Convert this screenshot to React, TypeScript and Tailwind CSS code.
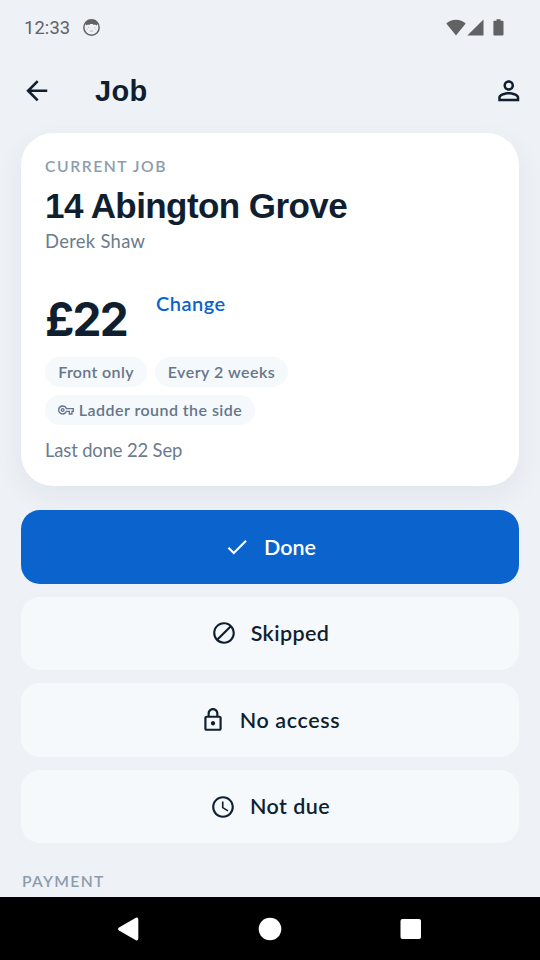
import React from 'react'

type IconProps = { d: string; className?: string }

const Icon: React.FC<IconProps> = ({ d, className = 'w-[26px] h-[26px]' }) => (
  <svg viewBox="0 0 24 24" fill="currentColor" className={className}>
    <path d={d} />
  </svg>
)

const icons = {
  back: 'M20 11H7.83l5.59-5.59L12 4l-8 8 8 8 1.41-1.41L7.83 13H20v-2z',
  person:
    'M12 5.9a2.1 2.1 0 1 1 0 4.2 2.1 2.1 0 0 1 0-4.2m0 9c2.97 0 6.1 1.46 6.1 2.1v1.1H5.9V17c0-.64 3.13-2.1 6.1-2.1M12 4C9.79 4 8 5.79 8 8s1.79 4 4 4 4-1.79 4-4-1.79-4-4-4zm0 9c-2.67 0-8 1.34-8 4v3h16v-3c0-2.66-5.33-4-8-4z',
  check: 'M9 16.17 4.83 12l-1.42 1.41L9 19 21 7l-1.41-1.41z',
  lock:
    'M12 17c1.1 0 2-.9 2-2s-.9-2-2-2-2 .9-2 2 .9 2 2 2zm6-9h-1V6c0-2.76-2.24-5-5-5S7 3.24 7 6v2H6c-1.1 0-2 .9-2 2v10c0 1.1.9 2 2 2h12c1.1 0 2-.9 2-2V10c0-1.1-.9-2-2-2zM9 6c0-1.66 1.34-3 3-3s3 1.34 3 3v2H9V6zm9 14H6V10h12v10z',
  skip:
    'M12 2C6.48 2 2 6.48 2 12s4.48 10 10 10 10-4.48 10-10S17.52 2 12 2zM4 12c0-4.42 3.58-8 8-8 1.85 0 3.55.63 4.9 1.69L5.69 16.9A7.9 7.9 0 0 1 4 12zm8 8a7.9 7.9 0 0 1-4.9-1.69L18.31 7.1A7.9 7.9 0 0 1 20 12c0 4.42-3.58 8-8 8z',
  clock:
    'M11.99 2C6.47 2 2 6.48 2 12s4.47 10 9.99 10C17.52 22 22 17.52 22 12S17.52 2 11.99 2zM12 20c-4.42 0-8-3.58-8-8s3.58-8 8-8 8 3.58 8 8-3.58 8-8 8zm.5-13H11v6l5.25 3.15.75-1.23-4.5-2.67z',
  key:
    'M22 19h-6v-4h-2.68c-1.14 2.42-3.6 4-6.32 4-3.86 0-7-3.14-7-7s3.14-7 7-7c2.72 0 5.17 1.58 6.32 4H24v6h-2v4zm-4-2h2v-4h2v-2H11.94l-.23-.67C11.01 8.34 9.11 7 7 7c-2.76 0-5 2.24-5 5s2.24 5 5 5c2.11 0 4.01-1.34 4.71-3.33l.23-.67H18v4zM7 15c-1.65 0-3-1.35-3-3s1.35-3 3-3 3 1.35 3 3-1.35 3-3 3zm0-4c-.55 0-1 .45-1 1s.45 1 1 1 1-.45 1-1-.45-1-1-1z',
}

const StatusBar: React.FC = () => (
  <div className="h-[55px] shrink-0 pl-6 pr-[36.5px] flex items-center text-[#616263]">
    <span className="pt-px font-['Roboto',sans-serif] text-[18.4px] tracking-[0.1px] leading-none">12:33</span>
    <svg viewBox="0 0 16 16" className="w-[17px] h-[17px] ml-[13px]" fill="none">
      <circle cx="8" cy="8" r="7.2" stroke="currentColor" strokeWidth="1.4" />
      <path d="M2 4.4 4.600 1h6.800L14 4.400l-1.200 1.700-1.400-1-1.200.5-1-.8H6.800l-1 .8-1.200-.5-1.400 1z" fill="currentColor" />
      <path d="M5.3 7.6v.8M10.7 7.6v.8M6.5 11.3h3M3.6 9.5h.7M11.7 9.5h.7" stroke="currentColor" strokeWidth=".8" opacity=".5" />
    </svg>
    <div className="ml-auto flex items-center">
      <svg viewBox="0 0 20 17" className="w-5 h-[17px]" fill="currentColor">
        <path d="M10 16.5.3 4.6C2.7 2.2 6.2.7 10 .7s7.3 1.5 9.7 3.9z" />
      </svg>
      <svg viewBox="0 0 17 17" className="w-[17px] h-[17px] ml-px" fill="currentColor">
        <path d="M16.5.5v16H.3z" />
      </svg>
      <svg viewBox="0 0 11 17" className="w-[11px] h-[17px] ml-[8.5px]" fill="currentColor">
        <path d="M3.5.2h4v1.6h2.2q.8 0 .8.8v13q0 1-.9 1H1.3q-.9 0-.9-1v-13q0-.8.8-.8h2.3z" />
      </svg>
    </div>
  </div>
)

const Header: React.FC = () => (
  <header className="h-[71px] shrink-0 pl-[21px] pr-[15.5px] pt-px flex items-center">
    <button>
      <Icon d={icons.back} className="w-[31.5px] h-[31.5px]" />
    </button>
    <h1 className="ml-[42.5px] font-['Liberation_Sans',sans-serif] font-bold text-[29px] leading-none tracking-[0.3px]">Job</h1>
    <button className="ml-auto">
      <Icon d={icons.person} className="w-[31.5px] h-[31.5px]" />
    </button>
  </header>
)

const Chip: React.FC<{ children: React.ReactNode; className: string }> = ({ children, className }) => (
  <span className={`h-[30px] rounded-full bg-[#f5f9fc] flex items-center justify-center whitespace-nowrap text-[16px] font-semibold text-[#65768a] ${className}`}>
    {children}
  </span>
)

const JobCard: React.FC = () => (
  <section className="h-[353px] shrink-0 rounded-[32px] bg-white px-6 pt-[22px] shadow-[0_10px_30px_rgba(15,35,55,0.06)]">
    <p className="h-[22px] leading-[22px] text-[15.7px] font-semibold tracking-[1.55px] text-[#8c9cae]">CURRENT JOB</p>
    <h2 className="mt-[9px] h-10 leading-10 font-['Liberation_Sans',sans-serif] font-bold text-[35px] tracking-[-0.57px] whitespace-nowrap">
      14 Abington Grove
    </h2>
    <p className="mt-[3px] h-6 leading-6 text-[18.4px] tracking-[0.3px] text-[#6b7b8e]">Derek Shaw</p>
    <div className="mt-[34px] h-[60px] flex items-start">
      <span className="w-[111px] pt-[7px] leading-[50px] font-['Inter',sans-serif] font-bold text-[46px] tracking-[-1.8px]">£22</span>
      <button className="pt-px leading-[30px] text-[20px] font-semibold tracking-[0.5px] text-[#0b63ce]">Change</button>
    </div>
    <div className="mt-[9.5px] flex flex-wrap gap-2">
      <Chip className="w-[102px] tracking-[0.35px]">Front only</Chip>
      <Chip className="w-[133px] tracking-[0.5px]">Every 2 weeks</Chip>
      <Chip className="w-[210px] gap-[5px] tracking-[0.45px]">
        <Icon d={icons.key} className="w-4 h-4" />
        Ladder round the side
      </Chip>
    </div>
    <p className="mt-[13px] leading-6 text-[18.4px] tracking-[-0.13px] text-[#6b7b8e]">Last done 22 Sep</p>
  </section>
)

type ActionProps = { icon: string; label: string; primary?: boolean; className?: string }

const Action: React.FC<ActionProps> = ({ icon, label, primary, className = '' }) => (
  <button
    className={`w-full h-[73.5px] shrink-0 rounded-[19px] flex items-center justify-center gap-3.5 text-[21.5px] font-semibold ${
      primary ? 'bg-[#0b63ce] text-white' : 'bg-[#f5f9fc]'
    }`}
  >
    <Icon d={icon} />
    <span className={className}>{label}</span>
  </button>
)

const NavBar: React.FC = () => (
  <nav className="h-[63.5px] shrink-0 pt-[1.5px] bg-black text-white flex items-center justify-center gap-[117px]">
    <svg viewBox="0 0 24 24" className="w-6 h-6" fill="currentColor">
      <path d="M2 10.5 18.9.8Q21.3 0 21.3 2.5v19q0 2.500-2.400 1.700L2 13.500q-2-1.500 0-3z" />
    </svg>
    <svg viewBox="0 0 24 24" className="w-6 h-6" fill="currentColor">
      <circle cx="12" cy="12" r="11.3" />
    </svg>
    <svg viewBox="0 0 24 24" className="w-6 h-6" fill="currentColor">
      <rect x="1.5" y="2" width="20.5" height="20" rx="2" />
    </svg>
  </nav>
)

const App: React.FC = () => (
  <div className="w-[540px] h-[960px] overflow-hidden bg-[#eef2f7] text-[#0f1f30] font-['Lato',sans-serif] flex flex-col">
    <StatusBar />
    <Header />
    <main className="flex-1 min-h-0 overflow-hidden px-[21px] pt-[7px] flex flex-col">
      <JobCard />
      <div className="mt-6 flex flex-col gap-[13.1px]">
        <Action icon={icons.check} label="Done" primary />
        <Action icon={icons.skip} label="Skipped" className="tracking-[0.4px]" />
        <Action icon={icons.lock} label="No access" className="tracking-[0.6px]" />
        <Action icon={icons.clock} label="Not due" className="tracking-[0.45px]" />
      </div>
      <p className="mt-[27px] ml-px leading-[22px] text-[15.7px] font-semibold tracking-[1.3px] text-[#8c9cae]">PAYMENT</p>
    </main>
    <NavBar />
  </div>
)

export default App
